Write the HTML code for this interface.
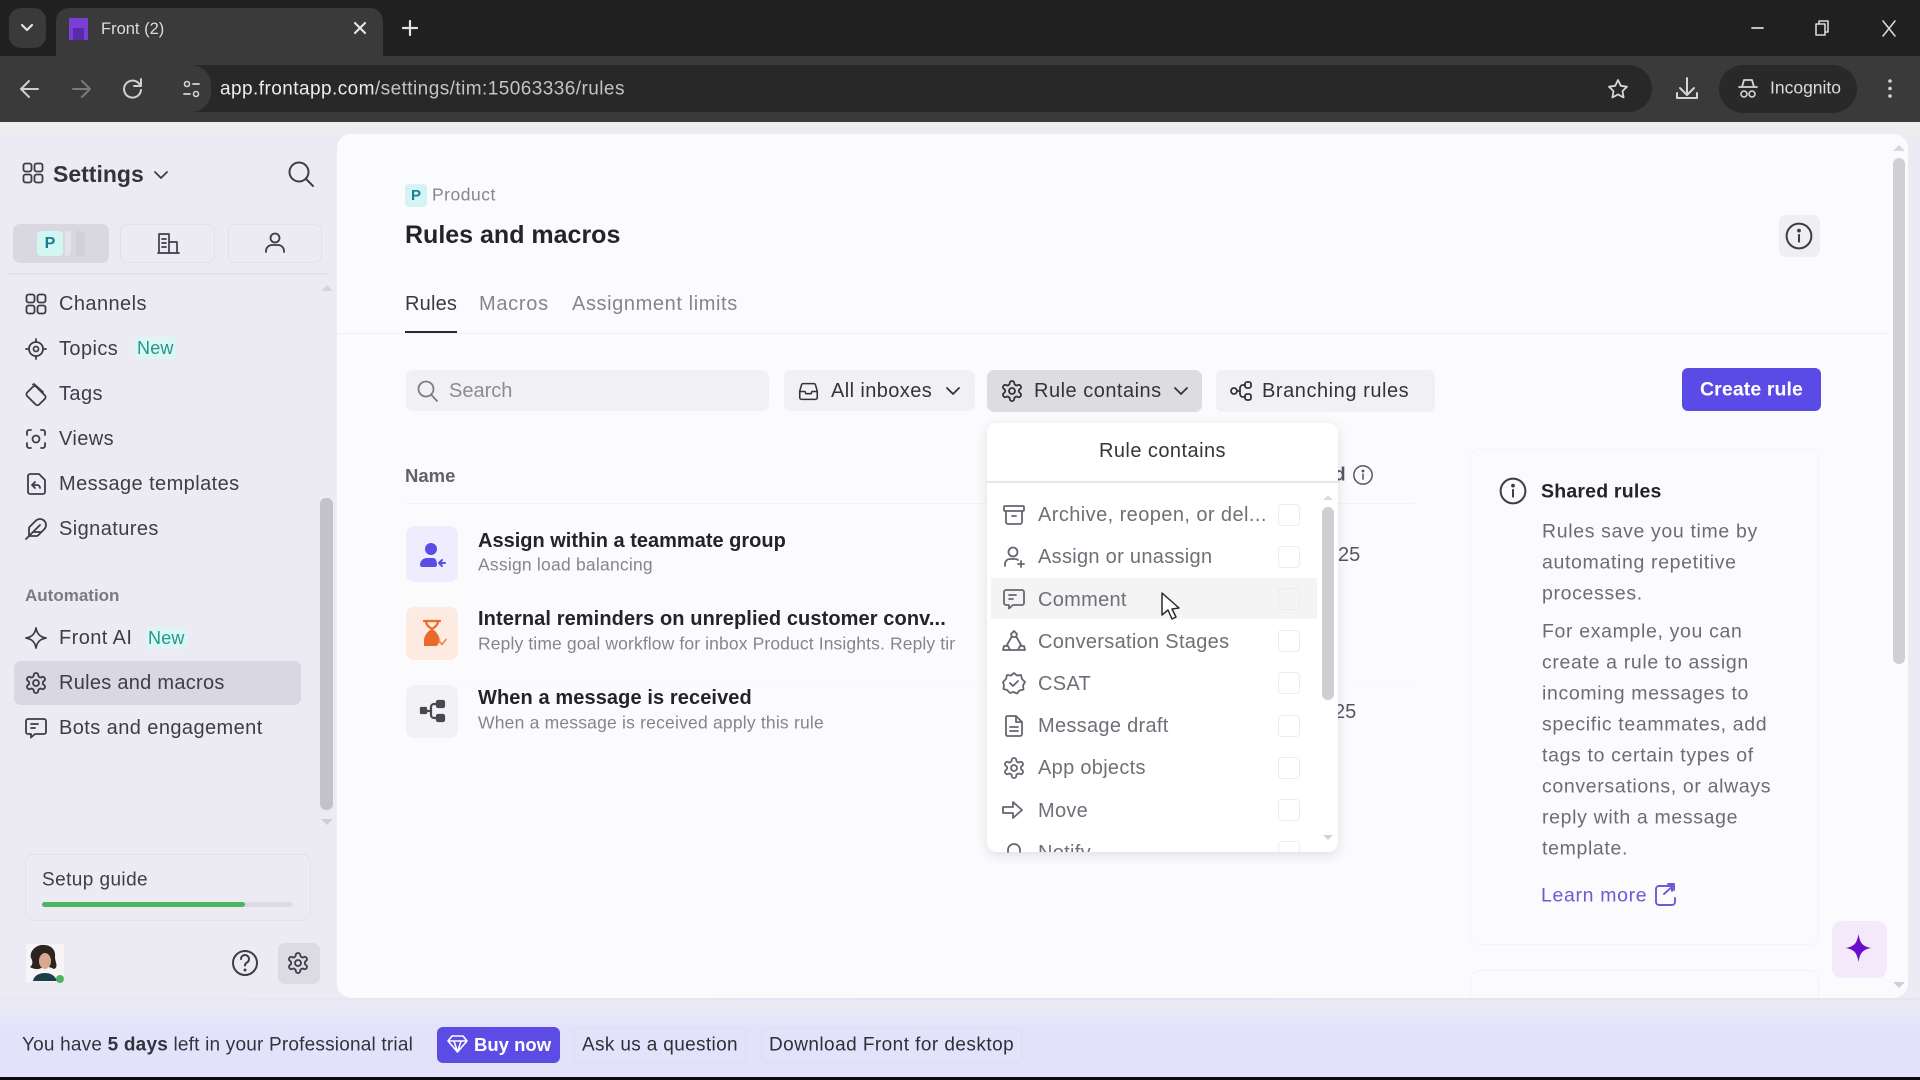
<!DOCTYPE html>
<html><head><meta charset="utf-8"><title>Front (2)</title>
<style>
html,body{margin:0;padding:0;width:1920px;height:1080px;overflow:hidden;background:#ecebf3;font-family:"Liberation Sans",sans-serif;color:#3a3a44}
.b{position:absolute}
.t{position:absolute;transform:translateY(calc(-50% + 1px));white-space:nowrap;line-height:1.2}
.n{font-size:20px;letter-spacing:.42px;color:#3d3d48}
.s{font-weight:bold}
.d{font-size:20px;letter-spacing:.3px;color:#6f6f77}
.p{font-size:19.5px;letter-spacing:.65px;color:#6c6c74;left:1542px}
.c{position:absolute;left:291px;width:22px;height:22px;border:1px solid #ececee;border-radius:4px;box-sizing:border-box}
.new{position:absolute;background:#dcf6f3;color:#22968f;font-size:18px;font-weight:500;letter-spacing:.2px;height:22px;line-height:22px;padding:0 2px;border-radius:3px}
svg.o{position:absolute;left:0;top:0;z-index:10;pointer-events:none}
.ic{fill:none;stroke-width:1.8;stroke-linecap:round;stroke-linejoin:round}
</style></head><body>

<!-- chrome -->
<div class="b" style="left:0;top:0;width:1920px;height:56px;background:#202020"></div>
<div class="b" style="left:0;top:56px;width:1920px;height:66px;background:#3a3a3a"></div>
<div class="b" style="left:9px;top:8px;width:37px;height:40px;background:#3a3a3a;border-radius:12px"></div>
<div class="b" style="left:56px;top:8px;width:327px;height:48px;background:#3a3a3a;border-radius:13px 13px 0 0"></div>
<div class="b" style="left:172px;top:65px;width:1480px;height:47px;background:#282828;border-radius:24px"></div>
<div class="b" style="left:172px;top:65px;width:39px;height:47px;background:#3a3a3a;border-radius:24px"></div>
<div class="b" style="left:1719px;top:65px;width:138px;height:48px;background:#292929;border-radius:24px"></div>
<div class="t" style="left:101px;top:29px;font-size:16.5px;color:#dcdcdc">Front (2)</div>
<div class="t" style="left:220px;top:89px;font-size:19px;letter-spacing:.44px;color:#ececec">app.frontapp.com<span style="color:#c4c4c4">/settings/tim:15063336/rules</span></div>
<div class="t" style="left:1770px;top:87px;font-size:17.5px;color:#dcdcdc">Incognito</div>

<!-- app shell -->
<div class="b" style="left:0;top:122px;width:1920px;height:13px;background:#ededf0"></div>
<div class="b" style="left:0;top:998px;width:1920px;height:79px;background:linear-gradient(90deg,#e9e8f6,#e3e2fa 50%,#e5e4f6)"></div>
<div class="b" style="left:0;top:1000px;width:1920px;height:77px;background:linear-gradient(180deg,#ecebf3,#e3e2fa 40%)"></div>
<div class="b" style="left:0;top:1077px;width:1920px;height:3px;background:#0c0c10"></div>
<div class="b" style="left:337px;top:134px;width:1571px;height:864px;background:#fbfbfd;border-radius:14px"></div>

<!-- sidebar -->
<div class="t s" style="left:53px;top:174px;font-size:23px;color:#33333d">Settings</div>
<div class="b" style="left:13px;top:224px;width:96px;height:39px;background:#d9d8e0;border-radius:7px"></div>
<div class="b" style="left:120px;top:224px;width:95px;height:39px;border:1px solid #e2e1ea;box-sizing:border-box;border-radius:7px"></div>
<div class="b" style="left:228px;top:224px;width:94px;height:39px;border:1px solid #e2e1ea;box-sizing:border-box;border-radius:7px"></div>
<div class="b" style="left:37px;top:231px;width:26px;height:25px;background:#d2f6f1;border-radius:4px;color:#18808a;font:bold 16px/25px 'Liberation Sans',sans-serif;text-align:center">P</div>
<div class="b" style="left:65px;top:231px;width:6px;height:25px;background:#e4e3ea;border-radius:0 4px 4px 0"></div>
<div class="b" style="left:76px;top:231px;width:9px;height:25px;background:#d1d0d8;border-radius:0 4px 4px 0"></div>
<div class="b" style="left:8px;top:273px;width:320px;height:2px;background:#e2e1e9"></div>
<div class="t n" style="left:59px;top:303px">Channels</div>
<div class="t n" style="left:59px;top:348px">Topics</div>
<div class="new" style="left:135px;top:337px">New</div>
<div class="t n" style="left:59px;top:393px">Tags</div>
<div class="t n" style="left:59px;top:438px">Views</div>
<div class="t n" style="left:59px;top:483px">Message templates</div>
<div class="t n" style="left:59px;top:528px">Signatures</div>
<div class="t s" style="left:25px;top:595px;font-size:17px;color:#7a7a84">Automation</div>
<div class="t n" style="left:59px;top:637px">Front AI</div>
<div class="new" style="left:146px;top:627px">New</div>
<div class="b" style="left:14px;top:661px;width:287px;height:44px;background:#d8d7e2;border-radius:7px"></div>
<div class="t n" style="left:59px;top:682px;letter-spacing:.28px">Rules and macros</div>
<div class="t n" style="left:59px;top:727px">Bots and engagement</div>
<div class="b" style="left:320px;top:498px;width:13px;height:312px;background:#c3c2cb;border-radius:6px"></div>
<div class="b" style="left:25px;top:854px;width:286px;height:67px;border:1px solid #e2e1ea;box-sizing:border-box;border-radius:9px"></div>
<div class="t n" style="left:42px;top:880px;font-size:19px">Setup guide</div>
<div class="b" style="left:42px;top:902px;width:251px;height:5px;background:#dcdbe3;border-radius:3px"></div>
<div class="b" style="left:42px;top:902px;width:203px;height:5px;background:#4cb564;border-radius:3px"></div>
<div class="b" style="left:278px;top:943px;width:42px;height:41px;background:#dcdbe3;border-radius:7px"></div>

<!-- banner -->
<div class="t" style="left:22px;top:1045px;font-size:19px;letter-spacing:.2px;color:#33333d">You have <b>5 days</b> left in your Professional trial</div>
<div class="b" style="left:437px;top:1027px;width:123px;height:36px;background:#5b4ce6;border-radius:6px"></div>
<div class="t s" style="left:474px;top:1044px;font-size:18.5px;color:#fff">Buy now</div>
<div class="b" style="left:574px;top:1027px;width:172px;height:36px;border:1px solid #dddcf0;box-sizing:border-box;border-radius:6px"></div>
<div class="t" style="left:582px;top:1045px;font-size:19px;letter-spacing:.35px;color:#2f2f39">Ask us a question</div>
<div class="b" style="left:761px;top:1027px;width:261px;height:36px;border:1px solid #dddcf0;box-sizing:border-box;border-radius:6px"></div>
<div class="t" style="left:769px;top:1045px;font-size:19px;letter-spacing:.45px;color:#2f2f39">Download Front for desktop</div>

<!-- main header -->
<div class="b" style="left:405px;top:184px;width:22px;height:23px;background:#d3f4f2;border-radius:4px;color:#1a7f8c;font:bold 15px/23px 'Liberation Sans',sans-serif;text-align:center">P</div>
<div class="t" style="left:432px;top:194px;font-size:17.5px;letter-spacing:.5px;color:#85858e">Product</div>
<div class="t s" style="left:405px;top:234px;font-size:25px;color:#23232b">Rules and macros</div>
<div class="t" style="left:405px;top:303px;font-size:20px;letter-spacing:.2px;color:#3a3a44">Rules</div>
<div class="t" style="left:479px;top:303px;font-size:20px;letter-spacing:.7px;color:#85858e">Macros</div>
<div class="t" style="left:572px;top:303px;font-size:20px;letter-spacing:.6px;color:#85858e">Assignment limits</div>
<div class="b" style="left:405px;top:331px;width:52px;height:3px;background:#2a2a35"></div>
<div class="b" style="left:337px;top:333px;width:1552px;height:1px;background:#f0f0f3"></div>
<div class="b" style="left:1779px;top:215px;width:41px;height:42px;background:#efeff1;border-radius:7px"></div>

<!-- toolbar -->
<div class="b" style="left:406px;top:370px;width:363px;height:41px;background:#f1f1f3;border-radius:7px"></div>
<div class="t" style="left:449px;top:390px;font-size:20px;color:#8b8b93">Search</div>
<div class="b" style="left:784px;top:370px;width:191px;height:41px;background:#f1f1f3;border-radius:7px"></div>
<div class="t" style="left:831px;top:390px;font-size:20px;letter-spacing:.4px;color:#33333d">All inboxes</div>
<div class="b" style="left:987px;top:370px;width:215px;height:42px;background:#dddde0;border-radius:7px"></div>
<div class="t" style="left:1034px;top:390px;font-size:20px;letter-spacing:.5px;color:#33333d">Rule contains</div>
<div class="b" style="left:1216px;top:370px;width:219px;height:42px;background:#f1f1f3;border-radius:7px"></div>
<div class="t" style="left:1262px;top:390px;font-size:20px;letter-spacing:.55px;color:#33333d">Branching rules</div>
<div class="b" style="left:1682px;top:368px;width:139px;height:43px;background:#5a4ae6;border-radius:6px"></div>
<div class="t s" style="left:1700px;top:389px;font-size:19.5px;color:#fff;font-weight:bold;letter-spacing:.1px">Create rule</div>

<!-- table -->
<div class="t s" style="left:405px;top:475px;font-size:18.5px;color:#62626b">Name</div>
<div class="b" style="left:405px;top:503px;width:1010px;height:1px;background:#f3f3f6"></div>
<div class="t" style="left:1334px;top:475px;font-size:19px;color:#55555e;font-weight:bold">d</div>
<div class="t" style="left:1338px;top:554px;font-size:20px;color:#55555e">25</div>
<div class="b" style="left:405px;top:682px;width:1010px;height:1px;background:#f8f8fa"></div>
<div class="t" style="left:1334px;top:711px;font-size:20px;color:#55555e">25</div>
<div class="b" style="left:406px;top:526px;width:52px;height:56px;background:#eeecfd;border-radius:8px"></div>
<div class="b" style="left:406px;top:607px;width:52px;height:53px;background:#fdeae1;border-radius:8px"></div>
<div class="b" style="left:406px;top:685px;width:52px;height:53px;background:#f2f2f5;border-radius:8px"></div>
<div class="t s" style="left:478px;top:540px;font-size:20px;color:#23232b">Assign within a teammate group</div>
<div class="t" style="left:478px;top:564px;font-size:17.5px;letter-spacing:.22px;color:#85858e">Assign load balancing</div>
<div class="t s" style="left:478px;top:618px;font-size:20px;letter-spacing:.1px;color:#23232b">Internal reminders on unreplied customer conv...</div>
<div class="t" style="left:478px;top:643px;width:477px;overflow:hidden;font-size:17.5px;letter-spacing:.12px;color:#85858e">Reply time goal workflow for inbox Product Insights. Reply time goal</div>
<div class="t s" style="left:478px;top:697px;font-size:20px;letter-spacing:.1px;color:#23232b">When a message is received</div>
<div class="t" style="left:478px;top:722px;font-size:17.5px;letter-spacing:.2px;color:#85858e">When a message is received apply this rule</div>

<!-- shared rules card -->
<div class="b" style="left:1470px;top:449px;width:349px;height:496px;border:1px solid #f5f5f8;box-sizing:border-box;border-radius:9px"></div>
<div class="b" style="left:1470px;top:970px;width:349px;height:40px;border:1px solid #f3f3f6;box-sizing:border-box;border-radius:9px;clip-path:inset(0 0 12px 0)"></div>
<div class="t s" style="left:1541px;top:491px;font-size:19.5px;letter-spacing:.2px;color:#23232b">Shared rules</div>
<div class="t p" style="top:531px">Rules save you time by</div>
<div class="t p" style="top:562px">automating repetitive</div>
<div class="t p" style="top:593px">processes.</div>
<div class="t p" style="top:631px">For example, you can</div>
<div class="t p" style="top:662px">create a rule to assign</div>
<div class="t p" style="top:693px">incoming messages to</div>
<div class="t p" style="top:724px">specific teammates, add</div>
<div class="t p" style="top:755px">tags to certain types of</div>
<div class="t p" style="top:786px">conversations, or always</div>
<div class="t p" style="top:817px">reply with a message</div>
<div class="t p" style="top:848px">template.</div>
<div class="t" style="left:1541px;top:895px;font-size:19.5px;letter-spacing:.65px;color:#6a5ad8;font-weight:500">Learn more</div>
<div class="b" style="left:1893px;top:158px;width:12px;height:506px;background:#cfcfd4;border-radius:6px"></div>
<div class="b" style="left:1832px;top:921px;width:55px;height:57px;background:#f4e9fb;border-radius:10px"></div>

<!-- dropdown -->
<div class="b" style="left:987px;top:423px;width:351px;height:429px;background:#fff;border-radius:10px;box-shadow:0 3px 12px rgba(40,40,60,.13);overflow:hidden;z-index:5">
  <div class="t" style="left:0;width:351px;text-align:center;top:27px;font-size:20px;letter-spacing:.45px;font-weight:500;color:#35353e">Rule contains</div>
  <div class="b" style="left:0;top:58px;width:351px;height:2px;background:#e6e6ea"></div>
  <div class="b" style="left:4px;top:155px;width:326px;height:41px;background:#f4f4f5"></div>
  <div class="t d" style="left:51px;top:91px;letter-spacing:.42px">Archive, reopen, or del...</div>
  <div class="t d" style="left:51px;top:133px">Assign or unassign</div>
  <div class="t d" style="left:51px;top:176px">Comment</div>
  <div class="t d" style="left:51px;top:218px">Conversation Stages</div>
  <div class="t d" style="left:51px;top:260px">CSAT</div>
  <div class="t d" style="left:51px;top:302px">Message draft</div>
  <div class="t d" style="left:51px;top:344px">App objects</div>
  <div class="t d" style="left:51px;top:387px">Move</div>
  <div class="t d" style="left:51px;top:429px">Notify</div>
  <div class="c" style="top:81px"></div><div class="c" style="top:123px"></div><div class="c" style="top:165px"></div><div class="c" style="top:207px"></div><div class="c" style="top:249px"></div><div class="c" style="top:292px"></div><div class="c" style="top:334px"></div><div class="c" style="top:376px"></div><div class="c" style="top:418px"></div>
  <div class="b" style="left:335px;top:84px;width:12px;height:193px;background:#cfcfd3;border-radius:6px"></div>
</div>

<!-- icons -->
<svg class="o" width="1920" height="1080" viewBox="0 0 1920 1080" xmlns="http://www.w3.org/2000/svg">
<defs>
<symbol id="gear" viewBox="0 0 24 24" overflow="visible"><path d="M12.22 2h-.44a2 2 0 0 0-2 2v.18a2 2 0 0 1-1 1.73l-.43.25a2 2 0 0 1-2 0l-.15-.08a2 2 0 0 0-2.73.73l-.22.38a2 2 0 0 0 .73 2.73l.15.1a2 2 0 0 1 1 1.72v.51a2 2 0 0 1-1 1.74l-.15.09a2 2 0 0 0-.73 2.73l.22.38a2 2 0 0 0 2.73.73l.15-.08a2 2 0 0 1 2 0l.43.25a2 2 0 0 1 1 1.73V20a2 2 0 0 0 2 2h.44a2 2 0 0 0 2-2v-.18a2 2 0 0 1 1-1.73l.43-.25a2 2 0 0 1 2 0l.15.08a2 2 0 0 0 2.73-.73l.22-.39a2 2 0 0 0-.73-2.73l-.15-.08a2 2 0 0 1-1-1.74v-.5a2 2 0 0 1 1-1.74l.15-.09a2 2 0 0 0 .73-2.73l-.22-.38a2 2 0 0 0-2.73-.73l-.15.08a2 2 0 0 1-2 0l-.43-.25a2 2 0 0 1-1-1.73V4a2 2 0 0 0-2-2z"/><circle cx="12" cy="12" r="3"/></symbol>
<symbol id="grid" viewBox="0 0 24 24" overflow="visible"><rect x="2.5" y="2.5" width="8" height="8" rx="2"/><rect x="13.5" y="2.5" width="8" height="8" rx="2"/><rect x="2.5" y="13.5" width="8" height="8" rx="2"/><rect x="13.5" y="13.5" width="8" height="8" rx="2"/></symbol>
<symbol id="info" viewBox="0 0 24 24" overflow="visible"><circle cx="12" cy="12" r="11"/><path d="M12 11v6"/><circle cx="12" cy="7.2" r=".8" fill="currentColor"/></symbol>
<symbol id="msg" viewBox="0 0 24 24" overflow="visible"><path d="M4 3h16a2 2 0 0 1 2 2v11a2 2 0 0 1-2 2h-9l-4 3.5V18H4a2 2 0 0 1-2-2V5a2 2 0 0 1 2-2z"/><path d="M7 8h7M7 12h4"/></symbol>
<symbol id="branch" viewBox="0 0 24 24" overflow="visible"><circle cx="5" cy="12" r="3"/><rect x="16" y="3" width="6" height="6" rx="2"/><rect x="16" y="15" width="6" height="6" rx="2"/><path d="M8 12h3M16 6h-2a3 3 0 0 0-3 3v6a3 3 0 0 0 3 3h2"/></symbol>
<symbol id="inbox" viewBox="0 0 24 24" overflow="visible"><path d="M6 3h12a2 2 0 0 1 2 1.5l2 7V19a2 2 0 0 1-2 2H4a2 2 0 0 1-2-2v-7.500l2-7A2 2 0 0 1 6 3z"/><path d="M2.500 12H8l1 2.500h6L16 12h5.500"/></symbol>
</defs>

<g fill="none" stroke-linecap="round" stroke-linejoin="round">
<!-- chrome icons -->
<path d="M22 25l5 5 5-5" stroke="#e3e3e3" stroke-width="2.2"/>
<rect x="69" y="18" width="19" height="22" fill="#7a3fd6"/><path d="M73 40V28h11v12" fill="#5b2aa8"/>
<path d="M355 23l10 10M365 23l-10 10" stroke="#e3e3e3" stroke-width="2.2"/>
<path d="M410 21v14M403 28h14" stroke="#e3e3e3" stroke-width="2.2"/>
<path d="M1752 28h11" stroke="#d8d8d8" stroke-width="1.8"/>
<rect x="1816" y="24" width="9" height="11" stroke="#d8d8d8" stroke-width="1.6"/><path d="M1819 24v-3h9v11h-3" stroke="#d8d8d8" stroke-width="1.6"/>
<path d="M1883 21l12 15M1895 21l-12 15" stroke="#d8d8d8" stroke-width="1.6"/>
<path d="M22 89h16M29 81l-8 8 8 8" stroke="#cfcfcf" stroke-width="2"/>
<path d="M73 89h16M82 81l8 8-8 8" stroke="#7a7a7a" stroke-width="2"/>
<path d="M140 85a8.500 8.500 0 1 0 1 5M141 79v7h-7" stroke="#cfcfcf" stroke-width="2"/>
<circle cx="187" cy="84" r="2.500" stroke="#d5d5d5" stroke-width="1.600"/><path d="M193 84h6M184 94h6" stroke="#d5d5d5" stroke-width="1.800"/><circle cx="196" cy="94" r="2.500" stroke="#d5d5d5" stroke-width="1.600"/>
<path d="M1618 80l2.800 5.800 6.200.9-4.500 4.400 1.100 6.300-5.600-3-5.600 3 1.100-6.300-4.500-4.400 6.200-.9z" stroke="#d5d5d5" stroke-width="1.800"/>
<path d="M1687 78v17M1680 88l7 7 7-7M1677 93v5h20v-5" stroke="#d5d5d5" stroke-width="2"/>
<path d="M1742 87l2-7h8l2 7zM1739 87h18" stroke="#d5d5d5" stroke-width="1.800"/><circle cx="1744" cy="94" r="3" stroke="#d5d5d5" stroke-width="1.600"/><circle cx="1752" cy="94" r="3" stroke="#d5d5d5" stroke-width="1.600"/>
<g fill="#d5d5d5"><circle cx="1890" cy="81" r="1.800"/><circle cx="1890" cy="88.500" r="1.800"/><circle cx="1890" cy="96" r="1.800"/></g>

<!-- settings header -->
<g stroke="#3d3d48" class="ic">
<use href="#grid" x="21" y="161" width="24" height="24"/>
<path d="M155 172l6 6 6-6"/>
<circle cx="299" cy="172" r="9.500" stroke-width="2"/><path d="M306 179l7 7" stroke-width="2"/>
<path d="M159 253v-19h10v19M169 242h8v11M158 253h21M162 239h4M162 243h4M162 247h4" stroke-width="1.700"/>
<circle cx="275" cy="238" r="4.500"/><path d="M266 252v-1a6 6 0 0 1 6-6h6a6 6 0 0 1 6 6v1"/>
<!-- nav -->
<use href="#grid" x="24" y="292" width="24" height="24"/>
<g transform="translate(24 337)"><circle cx="12" cy="12" r="7"/><circle cx="12" cy="12" r="2.500"/><path d="M12 2v3M12 19v3M2 12h3M19 12h3"/></g>
<g transform="translate(24 382)"><rect x="5" y="5" width="13" height="17" rx="2.500" transform="rotate(-45 12 13)"/><path d="M9 2.500l1-.5 9 8" /></g>
<g transform="translate(24 427)"><path d="M3 8V5a2 2 0 0 1 2-2h2M17 3h2a2 2 0 0 1 2 2v3M21 16v3a2 2 0 0 1-2 2h-2M7 21H5a2 2 0 0 1-2-2v-3"/><circle cx="12" cy="12" r="3.500"/></g>
<g transform="translate(24 472)"><path d="M6 2h9l6 6v12a2 2 0 0 1-2 2H6a2 2 0 0 1-2-2V4a2 2 0 0 1 2-2z"/><path d="M11 10l-3 3 3 3M8 13h5a3 3 0 0 1 3 3"/></g>
<g transform="translate(24 517)"><path d="M12.670 19a2 2 0 0 0 1.416-.588l6.154-6.172a6 6 0 0 0-8.490-8.490L5.586 9.914A2 2 0 0 0 5 11.328V18a1 1 0 0 0 1 1zM16 8 2 22M17.500 15H9"/></g>
<g transform="translate(24 626)"><path d="M12 2c1 6 4 9 10 10-6 1-9 4-10 10-1-6-4-9-10-10 6-1 9-4 10-10z"/></g>
<use href="#gear" x="24" y="671" width="24" height="24"/>
<use href="#msg" x="24" y="716" width="24" height="24"/>
<!-- footer icons -->
<circle cx="245" cy="963" r="12" stroke-width="2"/><path d="M241 959a4 4 0 1 1 6 3.500c-1.500.8-2 1.500-2 3" stroke-width="2"/><circle cx="245" cy="970" r=".6" fill="#3d3d48"/>
<use href="#gear" x="286" y="951" width="24" height="24"/>
<!-- main header -->
<use href="#info" color="#3d3d48" x="1785.5" y="222.5" width="27" height="27"/>
</g>

<!-- avatar -->
<rect x="26" y="944" width="38" height="38" fill="#f6f4f6"/>
<path d="M31 958c-2-8 7-14 13-13 8 0 12 6 11 12 0 5 4 10-1 12-2-1-5-2-5-2l-8 1c-3 2-8 1-11-1 3-2 3-6 1-9z" fill="#2c2420"/>
<ellipse cx="45" cy="961" rx="6" ry="8" fill="#d9a98f"/>
<path d="M33 981c1-6 7-8 12-8s10 2 12 8z" fill="#1f3f48"/>
<circle cx="60" cy="979" r="4" fill="#4cb564"/>

<!-- search & toolbar icons -->
<g stroke="#7d7d86" stroke-width="1.800"><circle cx="426" cy="389" r="7.500"/><path d="M431.500 395l5.500 6"/></g>
<g stroke="#33333d" class="ic">
<use href="#inbox" x="798" y="381" width="21" height="21"/>
<path d="M947 388l6 6 6-6"/>
<use href="#gear" x="1000" y="379" width="24" height="24"/>
<path d="M1175 388l6 6 6-6"/>
<use href="#branch" x="1229" y="379" width="24" height="24"/>
</g>
<g stroke="#55555e" class="ic"><use href="#info" color="#55555e" x="1353" y="465" width="20" height="20"/></g>

<!-- row icons -->
<circle cx="431" cy="549" r="6" fill="#5b4ce6"/>
<path d="M420 565c0-5 4-7 7-7h6c2 0 4 2 4 7 0 1-1 2-2 2h-13c-1 0-2-1-2-2z" fill="#5b4ce6"/>
<path d="M445 563h-6M442 560l-3 3 3 3" stroke="#5b4ce6" stroke-width="2"/>
<path d="M424 621h16M426 621c0 4 3 6 6 8 3-2 6-4 6-8" stroke="#ea6a2b" stroke-width="2.200"/>
<path d="M432 629c-4 2-8 6-8 12v5h13l3-5c-1-6-4-10-8-12z" fill="#ea6a2b"/>
<path d="M439 641l3 3.500 4-5" stroke="#ea8a5b" stroke-width="1.800"/>
<g stroke="#484852" stroke-width="2.200"><rect x="421" y="708" width="5" height="5" fill="#484852"/><rect x="437" y="701" width="7" height="6" fill="#484852" rx="1"/><rect x="437" y="715" width="7" height="6" fill="#484852" rx="1"/><path d="M426 711h5M437 704h-3a3 3 0 0 0-3 3v8a3 3 0 0 0 3 3h3"/></g>

<!-- dropdown icons -->
<g stroke="#66666f" class="ic" stroke-width="1.700">
<g transform="translate(1002 503)"><rect x="2" y="3" width="20" height="5" rx="1"/><path d="M4 8v11a2 2 0 0 0 2 2h12a2 2 0 0 0 2-2V8M10 13h4"/></g>
<g transform="translate(1002 545)"><circle cx="11" cy="7" r="4.500"/><path d="M3 21v-2a5 5 0 0 1 5-5h5a5 5 0 0 1 3 1M19 16v6M16 19h6"/></g>
<use href="#msg" x="1002" y="587" width="24" height="24"/>
<g transform="translate(1002 629)"><path d="M12 2l3 3-1 3h-4L9 5zM9.500 8L5 16M14.500 8l4.500 8M1 21l1-4h4l2 4zM16 21l2-4h4l1 4zM8 21h8"/></g>
<g transform="translate(1002 671)"><path d="M12 2l3 2.500 4-.500 1 4 3 3-2 3.500.5 4-4 1-2.500 3-3.500-1.500L8 22l-3-3-3.500-1L2 14 1 11l3-3 1-4 4 .500z"/><path d="M8 12l3 3 5-5"/></g>
<g transform="translate(1002 714)"><path d="M5 2h9l6 6v12a2 2 0 0 1-2 2H5a2 2 0 0 1-1-2V4a2 2 0 0 1 1-2zM14 2v6h6M8 13h8M8 17h8"/></g>
<use href="#gear" x="1002" y="756" width="24" height="24"/>
<path d="M1003 807h10v-5l9 8-9 8v-5h-10z"/>
<path d="M1008 852v-2a6 6 0 0 1 12 0v2"/>
</g>
<path d="M1323 500l5-5 5 5z" fill="#dedee2"/><path d="M1323 835l5 5 5-5z" fill="#d3d3d7"/>

<!-- cursor -->
<path d="M1162 593v22l6-5 4 9 4-2-4-8 7-1z" fill="#fff" stroke="#2a2a30" stroke-width="1.500"/>

<!-- right column -->
<use href="#info" color="#3d3d48" stroke="#3d3d48" class="ic" x="1499.500" y="477.500" width="27" height="27"/>
<path d="M1672 890v-5h-13a3 3 0 0 0-3 3v13a3 3 0 0 0 3 3h13a3 3 0 0 0 3-3v-4M1664 893l10-9M1668 883h6v6" stroke="#6a5ad8" stroke-width="1.900" transform="translate(0 1)"/>
<path d="M1858.500 934c1.500 9 4 12.500 13 14-9 1.500-11.500 5-13 14-1.500-9-4-12.500-13-14 9-1.500 11.500-5 13-14z" fill="#6a0dd0"/>

<!-- scroll arrows -->
<path d="M1893 151l6-6 6 6z" fill="#d8d8dc"/><path d="M1893 982l6 6 6-6z" fill="#d0d0d4"/>
<path d="M321 291l6-6 6 6z" fill="#d5d4dc"/><path d="M321 819l6 6 6-6z" fill="#cfced6"/>

<!-- buy now gem -->
<path d="M452 1036h11l4 5-9.500 11L448 1041zM448 1041h19M454 1041l3.500 11 3.500-11" stroke="#fff" stroke-width="1.600"/>
</g>
</svg>
</body></html>
